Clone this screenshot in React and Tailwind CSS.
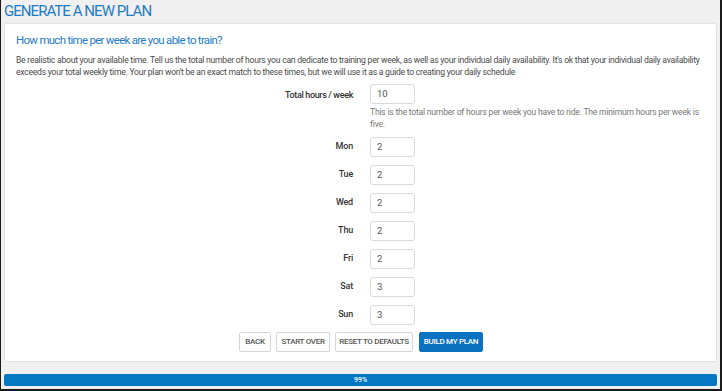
import React from "react";

const days = [
  ["Mon", "2"],
  ["Tue", "2"],
  ["Wed", "2"],
  ["Thu", "2"],
  ["Fri", "2"],
  ["Sat", "3"],
  ["Sun", "3"],
];

function Field({ value }) {
  return (
    <div className="w-[45px] h-[20px] border border-[#d9d9d9] rounded-[3px] bg-white flex items-center px-[6px] text-[9.5px] text-[#555]">
      {value}
    </div>
  );
}

export default function App() {
  return (
    <div
      className="w-[722px] h-[391px] bg-[#f0f0f0] border-l border-r-2 border-b-2 border-[#1a1a1a] flex flex-col overflow-hidden"
      style={{ fontFamily: "Roboto, 'Liberation Sans', sans-serif" }}
    >
      <div className="h-[23px] px-[3px] pt-[1px] text-[#1f7cc4] text-[15px] leading-[20px] tracking-[-0.95px]">
        GENERATE A NEW PLAN
      </div>
      <div className="mx-[3px] h-[339px] bg-white border border-[#e3e3e3] rounded-[2px] px-[11px] pt-[8px]">
        <div className="text-[#1f7cc4] text-[11.5px] leading-[16px] tracking-[-0.72px]">
          How much time per week are you able to train?
        </div>
        <p className="mt-[6px] text-[8.6px] leading-[12px] text-[#4a4a4a] tracking-[-0.25px]">
          Be realistic about your available time. Tell us the total number of hours you can dedicate to training per week, as well as your individual daily availability. It's ok that your individual daily availability exceeds your total weekly time. Your plan won't be an exact match to these times, but we will use it as a guide to creating your daily schedule
        </p>
        <div className="mt-[6px] flex">
          <div className="w-[354px] pr-[17px] text-right text-[9px] font-medium text-[#333] pt-[5px] tracking-[-0.35px]">
            Total hours / week
          </div>
          <div className="flex flex-col">
            <Field value="10" />
            <div className="mt-[2px] w-[332px] text-[8.6px] leading-[12px] text-[#777] tracking-[-0.22px]">
              This is the total number of hours per week you have to ride. The minimum hours per week is five.
            </div>
          </div>
        </div>
        <div className="mt-[7px] flex flex-col gap-[8px]">
          {days.map(([d, v]) => (
            <div key={d} className="flex items-center">
              <div className="w-[354px] pr-[17px] text-right text-[9px] font-medium text-[#333] tracking-[-0.2px]">
                {d}
              </div>
              <Field value={v} />
            </div>
          ))}
        </div>
        <div className="mt-[7px] flex gap-[5px] pl-[223px] text-[8px] tracking-[-0.3px] font-medium">
          <button className="w-[32px] h-[20px] border border-[#d6d6d6] rounded-[2px] bg-white text-[#555]">BACK</button>
          <button className="w-[54px] h-[20px] border border-[#d6d6d6] rounded-[2px] bg-white text-[#555]">START OVER</button>
          <button className="w-[78px] h-[20px] border border-[#d6d6d6] rounded-[2px] bg-white text-[#555]">RESET TO DEFAULTS</button>
          <button className="w-[64px] h-[20px] ml-[1px] border border-[#0a72c0] rounded-[2px] bg-[#0a72c0] text-white">BUILD MY PLAN</button>
        </div>
      </div>
      <div className="mt-[12px] mx-[3px] h-[12px] bg-[#0677c3] rounded-[2px] flex items-center justify-center text-white text-[7px] font-medium">
        99%
      </div>
    </div>
  );
}
